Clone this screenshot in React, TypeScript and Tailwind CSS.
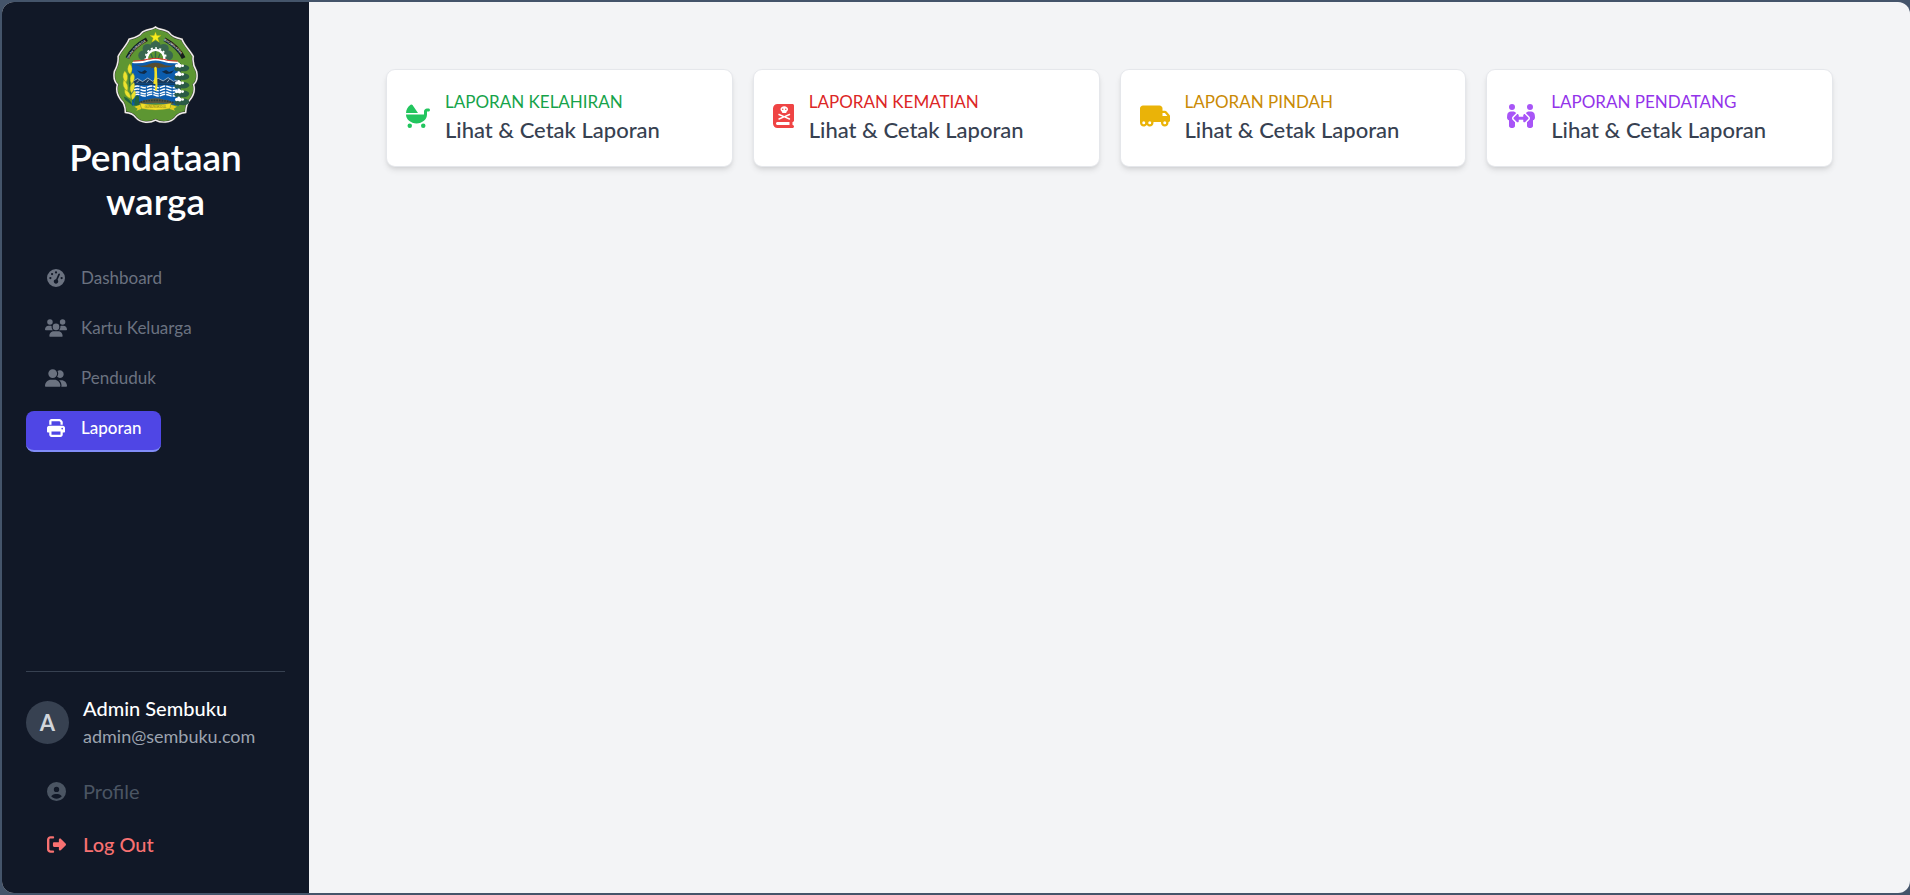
import type { ReactNode } from 'react'
import type { IconType } from 'react-icons'
import {
  FaBabyCarriage,
  FaBookSkull,
  FaCircleUser,
  FaGaugeHigh,
  FaPeopleArrows,
  FaPrint,
  FaRightFromBracket,
  FaTruckMoving,
  FaUserGroup,
  FaUsers,
} from 'react-icons/fa6'

const navItems: { label: string; icon: IconType; iconClass: string; active?: boolean }[] = [
  { label: 'Dashboard', icon: FaGaugeHigh, iconClass: 'w-[18px]' },
  { label: 'Kartu Keluarga', icon: FaUsers, iconClass: 'w-[22px]' },
  { label: 'Penduduk', icon: FaUserGroup, iconClass: 'w-[22px]' },
  { label: 'Laporan', icon: FaPrint, iconClass: 'w-[18px]', active: true },
]

const reports: { title: string; icon: IconType; iconClass: string; titleClass: string }[] = [
  { title: 'LAPORAN KELAHIRAN', icon: FaBabyCarriage, iconClass: 'w-6 text-[#22c55e]', titleClass: 'text-[#16a34a]' },
  { title: 'LAPORAN KEMATIAN', icon: FaBookSkull, iconClass: 'w-[21px] text-[#ef4444]', titleClass: 'text-[#dc2626]' },
  { title: 'LAPORAN PINDAH', icon: FaTruckMoving, iconClass: 'w-[30px] text-[#eab308]', titleClass: 'text-[#ca8a04]' },
  { title: 'LAPORAN PENDATANG', icon: FaPeopleArrows, iconClass: 'w-[30px] text-[#a855f7]', titleClass: 'text-[#9333ea]' },
]

const waves = [219, 228, 237, 244]
const treeTiers = [150, 176, 202, 228, 252]

function Emblem() {
  return (
    <svg viewBox="69 35 256 296" className="h-[98px] w-[85px]" role="img" aria-label="Lambang daerah">
      <path
        d="M197 38C188 47 164 45 155 56C147 69 128 72 117 75C112 91 93 108 84 127C86 146 81 157 73 172C69 192 73 203 82 212C77 228 81 243 92 258C102 267 106 279 106 296C122 297 130 300 137 311C153 330 181 328 197 319C213 328 242 329 257 311C264 301 274 297 288 296C289 280 291 268 301 258C313 243 317 228 312 212C322 203 325 190 321 172C312 157 308 146 311 127C301 108 282 91 277 75C262 72 247 69 239 56C230 45 206 47 197 38Z"
        fill="#5d9632"
        stroke="#3d3d37"
        strokeWidth="7"
      />
      <path
        d="M197 38C188 47 164 45 155 56C147 69 128 72 117 75C112 91 93 108 84 127C86 146 81 157 73 172C69 192 73 203 82 212C77 228 81 243 92 258C102 267 106 279 106 296C122 297 130 300 137 311C153 330 181 328 197 319C213 328 242 329 257 311C264 301 274 297 288 296C289 280 291 268 301 258C313 243 317 228 312 212C322 203 325 190 321 172C312 157 308 146 311 127C301 108 282 91 277 75C262 72 247 69 239 56C230 45 206 47 197 38Z"
        fill="none"
        stroke="#f1eeee"
        strokeWidth="4.5"
      />
      <g fill="#39664e">
        <circle cx="160" cy="124" r="15" />
        <circle cx="173" cy="104" r="15" />
        <circle cx="197" cy="96" r="16" />
        <circle cx="222" cy="104" r="15" />
        <circle cx="235" cy="124" r="15" />
      </g>
      <path d="M172 138A26 26 0 1 1 223 138" fill="none" stroke="#fff" strokeWidth="7" />
      <path d="M167 138A31 31 0 1 1 228 138" fill="none" stroke="#fff" strokeWidth="5" strokeDasharray="6 7" />
      <path d="M177 138A21 21 0 1 1 218 138Z" fill="#5d9632" />
      <path d="M197 136V112M190 136L183 119M204 136L211 119" stroke="#2f6a48" strokeWidth="4" />
      <path d="M197 53L201 64L214 64L204 71L208 84L197 76L186 84L190 71L180 64L193 64Z" fill="#f8ee1d" stroke="#b4a51b" strokeWidth="1" />
      <path id="motto-left" d="M117 134Q132 101 174 79" fill="none" />
      <path id="motto-right" d="M222 79Q264 101 280 134" fill="none" />
      <path d="M112 132Q128 98 171 75" fill="none" stroke="#171f1c" strokeWidth="12" />
      <path d="M224 75Q266 98 282 132" fill="none" stroke="#171f1c" strokeWidth="12" />
      <g fill="#d0d0d0" fontFamily="Liberation Sans, sans-serif" fontSize="10" fontWeight="700">
        <text><textPath href="#motto-left">DHAKSINARGA</textPath></text>
        <text><textPath href="#motto-right">BHUMIKARTA</textPath></text>
      </g>
      <path d="M126 147Q197 128 268 147V276Q197 261 126 276Z" fill="#0b5cad" />
      <path d="M126 147Q151 150 176 142Q197 137 218 142Q243 150 268 147L264 142Q238 142 218 137Q197 131 176 137Q156 142 130 142Z" fill="#fff" />
      <path d="M130 141Q156 141 176 135Q197 130 218 135Q238 141 264 141" fill="none" stroke="#e2312c" strokeWidth="3" />
      <path d="M135 153Q163 159 180 149Q197 143 215 149Q232 159 261 153Q226 165 208 158L214 163L202 161V171H192V161L180 163L186 158Q166 163 135 153Z" fill="#574b31" />
      <path d="M141 169L155 174L165 168L172 173L163 180L150 178Z M216 173L229 168L238 174L253 169L245 178L230 180Z" fill="#102b47" />
      <path d="M128 208V200L143 194L158 202L174 192L188 201L205 193L220 200L235 191L251 201L266 197V208Z" fill="#16385b" />
      <path d="M130 201L143 194L158 203L174 192L188 202L205 193L220 201L235 191L251 202L266 197M140 207L148 199M170 206L177 197M232 205L239 196" fill="none" stroke="#d7e4ef" strokeWidth="2" />
      <path d="M129 211H266" stroke="#123a5e" strokeWidth="4" />
      {waves.map((y) => (
        <path
          key={y}
          d={`M132 ${y}Q143 ${y - 5} 153 ${y}T174 ${y}T195 ${y}T216 ${y}T237 ${y}T262 ${y}`}
          fill="none"
          stroke="#fff"
          strokeWidth="4.5"
          strokeDasharray="17 3"
        />
      ))}
      <path d="M193 162Q197 154 201 162L203 213L201 230H195L197 211L190 209Q196 190 193 162Z" fill="#f1df28" />
      <path d="M142 272Q155 258 175 257Q197 250 220 257Q244 258 254 272Q197 263 142 272Z" fill="#5b5940" />
      <path d="M144 266Q197 253 252 266" fill="none" stroke="#2f4138" strokeWidth="5" strokeDasharray="5 3" />
      <g fill="#216440">
        <path d="M138 246Q148 242 147 250V275H133Q131 260 138 246Z" />
        <path d="M101 248Q120 254 129 276L105 258Z" />
      </g>
      <path d="M119 161Q112 210 131 266" fill="none" stroke="#216440" strokeWidth="3" />
      <g fill="#ece32e" stroke="#a9aa26" strokeWidth="1">
        <path d="M119 149Q133 163 120 181Q106 165 119 149Z" />
        <path d="M104 171Q119 185 108 206Q92 189 104 171Z" />
        <path d="M129 177Q140 193 125 210Q114 193 129 177Z" />
        <path d="M101 198Q117 211 112 231Q94 219 101 198Z" />
        <path d="M132 205Q139 224 124 237Q113 219 132 205Z" />
        <path d="M104 227Q122 235 122 254Q102 247 104 227Z" />
        <path d="M135 229Q141 247 127 258Q117 242 135 229Z" />
      </g>
      <path d="M271 148V272" stroke="#29543f" strokeWidth="6" />
      {treeTiers.map((y) => (
        <g key={y}>
          <ellipse cx="281" cy={y + 12} rx="18" ry="10" fill="#2a5a45" />
          <ellipse cx="265" cy={y + 14} rx="11" ry="8" fill="#2a5a45" />
          <circle cx="267" cy={y} r="4" fill="#fff" />
          <circle cx="261" cy={y + 5} r="5" fill="#fff" />
          <circle cx="270" cy={y + 5} r="6" fill="#fff" />
          <circle cx="279" cy={y + 5} r="4" fill="#fff" />
        </g>
      ))}
      <path d="M133 279L151 273L154 286L139 291L143 285Z M262 279L244 273L240 286L256 291L252 285Z" fill="#e5ce20" />
      <path d="M151 268Q197 279 244 268L240 284Q197 293 155 284Z" fill="#f1df28" stroke="#b6a01f" strokeWidth="1" />
      <text x="197" y="282" textAnchor="middle" fontFamily="Liberation Sans, sans-serif" fontSize="9" fill="#6d681c">
        GUNUNGKIDUL
      </text>
    </svg>
  )
}

function AccountLink({ icon: Icon, className, children }: { icon: IconType; className: string; children: ReactNode }) {
  return (
    <a href="#" className={`flex h-[42px] items-center pl-5 text-[20px] leading-6 ${className}`}>
      <span className="flex w-5 justify-center">
        <Icon className="size-[19px]" />
      </span>
      <span className="ml-[17px]">{children}</span>
    </a>
  )
}

export default function App() {
  return (
    <div className="flex min-h-screen bg-[#44546a] py-0.5 pl-0.5 font-['Lato','Open_Sans',sans-serif]">
      <div className="flex flex-1 overflow-hidden rounded-xl bg-gray-100">
        <aside className="flex w-[307px] shrink-0 flex-col bg-[#111827] px-6 pt-6 pb-7">
          <header className="flex flex-col items-center">
            <Emblem />
            <h1 className="mt-[11px] px-8 text-center text-[37px] leading-11 font-semibold text-white">Pendataan warga</h1>
          </header>

          <nav className="mt-[38px] flex flex-col items-start gap-[9px]">
            {navItems.map(({ label, icon: Icon, iconClass, active }) => (
              <a
                key={label}
                href="#"
                aria-current={active ? 'page' : undefined}
                className={`flex h-[41px] items-center rounded-lg border-b-2 pr-[19px] pb-[6px] pl-[18px] text-[17px] leading-6 ${
                  active ? 'border-[#818cf8] bg-[#4f46e5] font-medium text-white' : 'border-transparent text-[#6b7280]'
                }`}
              >
                <span className="flex w-6 justify-center">
                  <Icon className={`h-[18px] shrink-0 ${iconClass}`} />
                </span>
                <span className="ml-[13px]">{label}</span>
              </a>
            ))}
          </nav>

          <section className="mt-auto border-t border-[#374151] pt-[22px]">
            <div className="flex items-center">
              <div className="flex size-[43px] items-center justify-center rounded-full bg-[#374151] text-[22px] font-bold text-[#d1d5db]">
                A
              </div>
              <div className="ml-[14px]">
                <p className="text-[20px] leading-7 font-medium text-white">Admin Sembuku</p>
                <p className="text-[18px] leading-7 text-[#9ca3af]">admin@sembuku.com</p>
              </div>
            </div>
            <div className="mt-5 flex flex-col gap-[11px]">
              <AccountLink icon={FaCircleUser} className="text-[#4b5563]">
                Profile
              </AccountLink>
              <AccountLink icon={FaRightFromBracket} className="font-medium text-[#f87171]">
                Log Out
              </AccountLink>
            </div>
          </section>
        </aside>

        <main className="flex-1 px-[77px] pt-[67px]">
          <div className="grid grid-cols-4 gap-5">
            {reports.map(({ title, icon: Icon, iconClass, titleClass }) => (
              <a
                key={title}
                href="#"
                className="flex h-[98px] items-center rounded-[9px] border border-gray-200 bg-white px-[19px] pb-1 shadow-md"
              >
                <Icon className={`h-6 shrink-0 ${iconClass}`} />
                <div className="ml-[15px]">
                  <p className={`text-[17px] leading-7 ${titleClass}`}>{title}</p>
                  <p className="text-[22px] leading-7 font-medium text-[#374151]">Lihat &amp; Cetak Laporan</p>
                </div>
              </a>
            ))}
          </div>
        </main>
      </div>
    </div>
  )
}
